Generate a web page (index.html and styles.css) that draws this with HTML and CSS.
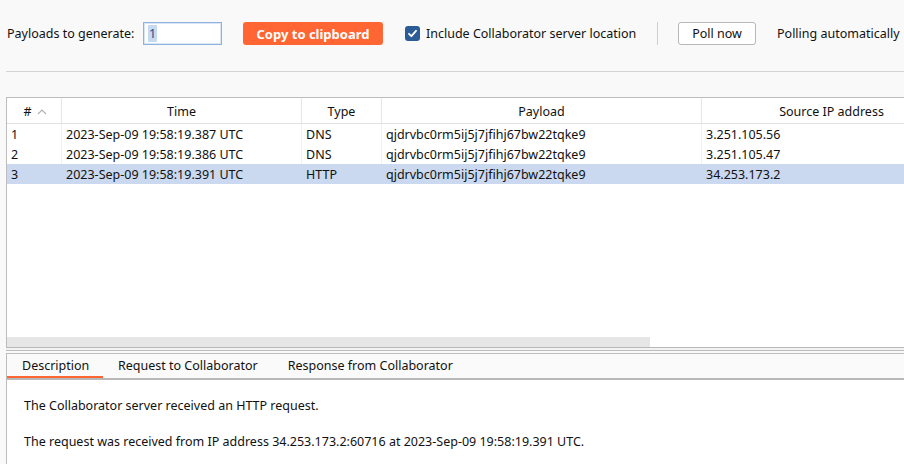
FILE: index.html
```html
<!DOCTYPE html>
<html>
<head>
<meta charset="utf-8">
<link rel="stylesheet" href="styles.css">
</head>
<body>
<div class="toolbar">
  <span class="lbl lbl-payloads">Payloads to generate:</span>
  <div class="num-input"><span class="sel">1</span></div>
  <button class="btn-primary">Copy to clipboard</button>
  <label class="check">
    <span class="box"><svg width="11" height="11" viewBox="0 0 11 11"><path d="M2 5.8 L4.4 8.2 L9 2.8" fill="none" stroke="#fff" stroke-width="1.8" stroke-linecap="round" stroke-linejoin="round"/></svg></span>
    <span class="lbl lbl-include">Include Collaborator server location</span>
  </label>
  <span class="vsep"></span>
  <button class="btn-secondary">Poll now</button>
  <span class="lbl lbl-polling">Polling automatically</span>
</div>
<div class="hline"></div>

<div class="table-panel">
  <div class="grid head">
    <div class="hc hc-num">#<svg class="chev" width="10" height="6" viewBox="0 0 10 6"><path d="M1 5 L5 1 L9 5" fill="none" stroke="#b0b0b0" stroke-width="1.1"/></svg></div>
    <div class="hc">Time</div>
    <div class="hc">Type</div>
    <div class="hc">Payload</div>
    <div class="hc">Source IP address</div>
  </div>
  <div class="grid row">
    <div class="c">1</div><div class="c">2023-Sep-09 19:58:19.387 UTC</div><div class="c">DNS</div><div class="c">qjdrvbc0rm5ij5j7jfihj67bw22tqke9</div><div class="c">3.251.105.56</div>
  </div>
  <div class="grid row">
    <div class="c">2</div><div class="c">2023-Sep-09 19:58:19.386 UTC</div><div class="c">DNS</div><div class="c">qjdrvbc0rm5ij5j7jfihj67bw22tqke9</div><div class="c">3.251.105.47</div>
  </div>
  <div class="grid row selected">
    <div class="c">3</div><div class="c">2023-Sep-09 19:58:19.391 UTC</div><div class="c">HTTP</div><div class="c">qjdrvbc0rm5ij5j7jfihj67bw22tqke9</div><div class="c">34.253.173.2</div>
  </div>
  <div class="filler"></div>
  <div class="hscroll"><div class="thumb"></div></div>
</div>
<div class="splitter"></div>

<div class="detail-panel">
  <div class="tabs">
    <span class="tab active">Description</span>
    <span class="tab">Request to Collaborator</span>
    <span class="tab">Response from Collaborator</span>
  </div>
  <div class="content">
    <p>The Collaborator server received an HTTP request.</p>
    <p>The request was received from IP address 34.253.173.2:60716 at 2023-Sep-09 19:58:19.391 UTC.</p>
  </div>
</div>
</body>
</html>
```
FILE: styles.css
```css
html, body {
  margin: 0;
  padding: 0;
  background: #f9f9f9;
  font-family: "Noto Sans", "Open Sans", sans-serif;
  font-size: 12.5px;
  color: #111;
  overflow: hidden;
  width: 904px;
  height: 464px;
}

.toolbar {
  display: flex;
  align-items: center;
  height: 23px;
  padding: 22px 0 26px 7px;
  white-space: nowrap;
}
.lbl { display: inline-block; flex-shrink: 0; }
.lbl-payloads { width: 126px; margin-right: 10px; }
.num-input {
  height: 21px;
  border: 1px solid #8fb3df;
  background: #fff;
  box-shadow: inset 0 0 0 1px #d7e5f6;
  display: flex;
  align-items: center;
  padding-left: 4px;
  box-sizing: content-box;
  width: 73px;
  flex-shrink: 0;
}
.sel {
  background: #c7daf2;
  color: #1d4d8a;
  padding: 0 1px;
  line-height: 17px;
}
.btn-primary {
  margin-left: 21px;
  width: 140px;
  height: 23px;
  background: #ff6633;
  color: #fff;
  border: none;
  border-radius: 3px;
  font-family: inherit;
  font-size: 13px;
  font-weight: bold;
  padding: 0;
  flex-shrink: 0;
}
.check {
  margin-left: 22px;
  display: flex;
  align-items: center;
  flex-shrink: 0;
}
.box {
  width: 15px;
  height: 15px;
  border-radius: 3px;
  background: #2b5c96;
  display: flex;
  align-items: center;
  justify-content: center;
  margin-right: 6px;
}
.lbl-include { width: 209px; }
.vsep {
  width: 1px;
  height: 23px;
  background: #cfcfcf;
  margin-left: 22px;
  flex-shrink: 0;
}
.btn-secondary {
  margin-left: 20px;
  width: 78px;
  height: 23px;
  background: #fff;
  border: 1px solid #b8b8b8;
  border-radius: 3px;
  font-family: inherit;
  font-size: 12.5px;
  color: #111;
  padding: 0;
  flex-shrink: 0;
}
.lbl-polling { margin-left: 21px; }

.hline {
  margin-left: 6px;
  height: 1px;
  background: #d3d3d3;
  margin-bottom: 25px;
}

.table-panel {
  margin-left: 6px;
  border-left: 1px solid #bdbdbd;
  border-top: 1px solid #bdbdbd;
  border-bottom: 1px solid #b9b9b9;
  background: #fff;
  height: 249px;
  display: flex;
  flex-direction: column;
  overflow: hidden;
}
.grid {
  display: grid;
  grid-template-columns: 55px 240px 80px 320px 260px;
}
.head {
  height: 25px;
  border-bottom: 1px solid #e1e1e1;
}
.hc {
  display: flex;
  align-items: center;
  justify-content: center;
  border-right: 1px solid #e6e6e6;
  padding-top: 1px;
}
.hc-num { gap: 5px; padding-left: 2px; }
.chev { margin-top: 1px; }
.row { height: 20px; }
.c {
  display: flex;
  align-items: center;
  padding-left: 4px;
  border-right: 1px solid #f0f0f0;
  white-space: nowrap;
  overflow: hidden;
}
.row.selected { background: #cad9ef; }
.row.selected .c { border-right-color: transparent; }
.filler { flex: 1; }
.hscroll {
  height: 10px;
  background: #fff;
}
.thumb {
  width: 643px;
  height: 10px;
  background: #e6e6e6;
}

.splitter {
  height: 2px;
  margin-left: 6px;
  border-bottom: 1px solid #bdbdbd;
  background: #f2f2f2;
}

.detail-panel {
  margin-top: 2px;
  margin-left: 6px;
  border-left: 1px solid #bdbdbd;
  border-top: 1px solid #bdbdbd;
  background: #fff;
  height: 120px;
}
.tabs {
  height: 24px;
  background: #fafafa;
  border-bottom: 2px solid #b8b8b8;
  display: flex;
  align-items: stretch;
}
.tab {
  padding: 0 15px;
  display: flex;
  align-items: center;
  padding-bottom: 2px;
  box-sizing: border-box;
}
.tab.active {
  border-bottom: 2px solid #ff6633;
  padding-bottom: 0;
  width: 96px;
}
.content {
  padding: 17px 0 0 17px;
}
.content p {
  margin: 0 0 18px 0;
  line-height: 18px;
}
```
